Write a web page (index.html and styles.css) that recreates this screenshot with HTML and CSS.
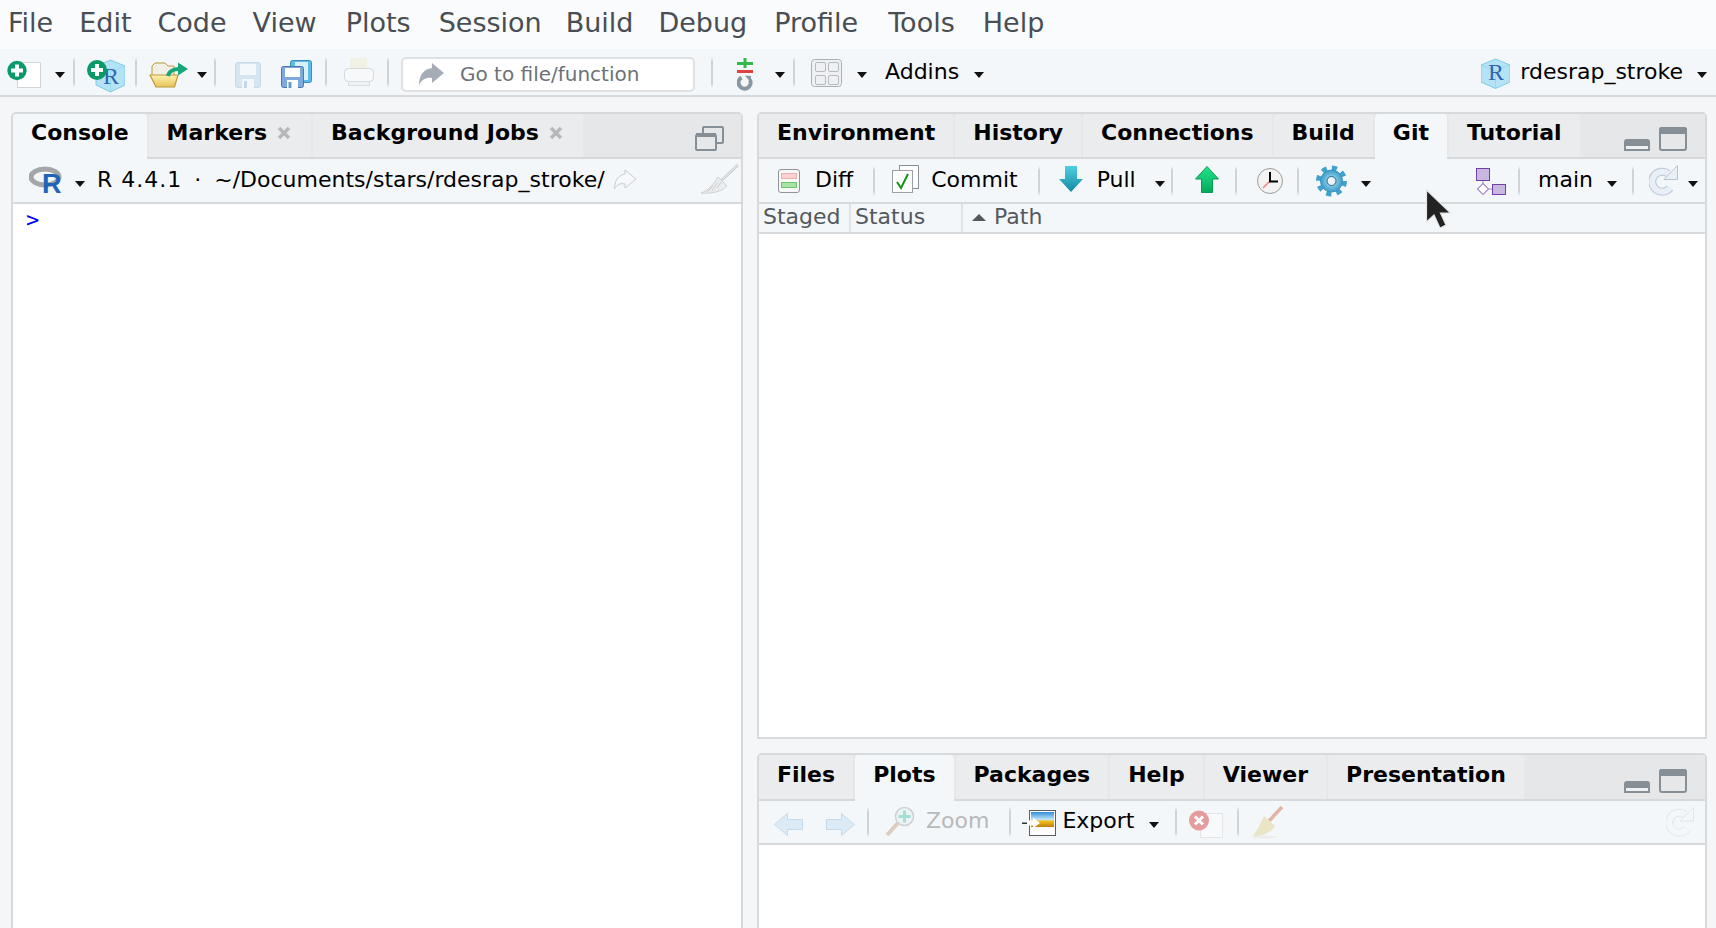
FILE: index.html
```html
<!DOCTYPE html>
<html lang="en">
<head>
<meta charset="utf-8">
<title>RStudio</title>
<link rel="stylesheet" href="styles.css">
</head>
<body>
<svg class="defs" width="0" height="0">
  <defs>
    <linearGradient id="gPull" x1="0" y1="0" x2="0" y2="1"><stop offset="0" stop-color="#4fd0e0"/><stop offset="1" stop-color="#1488a6"/></linearGradient>
    <linearGradient id="gUp" x1="0" y1="0" x2="0" y2="1"><stop offset="0" stop-color="#1fe58a"/><stop offset="1" stop-color="#08a85c"/></linearGradient>
    <radialGradient id="gGear"><stop offset="0" stop-color="#b5e8f8"/><stop offset="1" stop-color="#3a9cc8"/></radialGradient>
    <linearGradient id="gFolder" x1="0" y1="0" x2="0" y2="1"><stop offset="0" stop-color="#fff2b0"/><stop offset="1" stop-color="#e6c35a"/></linearGradient>
    <linearGradient id="gSky" x1="0" y1="0" x2="0" y2="1"><stop offset="0" stop-color="#2f8fdc"/><stop offset="0.5" stop-color="#bfe4f5"/><stop offset="0.6" stop-color="#f2c21e"/><stop offset="1" stop-color="#c07d10"/></linearGradient>
  </defs>
</svg>

<nav class="menubar">
  <span>File</span><span class="ml26">Edit</span><span class="ml26">Code</span><span class="ml26">View</span><span class="ml29">Plots</span><span class="ml28">Session</span><span class="ml24">Build</span><span class="ml25">Debug</span><span class="ml27">Profile</span><span class="ml30">Tools</span><span class="ml28">Help</span>
</nav>

<div class="maintool">
  <svg width="34" height="47" viewBox="7 49 34 47"><rect x="17.500" y="62.500" width="23" height="25" fill="#fff" stroke="#d2d6da"/><circle cx="17" cy="70.500" r="9.700" fill="#0a9a68"/><path d="M11 68.500h4v-4h4v4h4v4h-4v4h-4v-4h-4z" fill="#fff"/></svg>
  <i class="caret ml14"></i>
  <i class="sep ml8"></i>
  <svg class="ml12" width="38" height="47" viewBox="87 49 38 47"><path d="M110.500 60L125 66V85L110.500 92L96 85V66Z" fill="#b4e3f6" stroke="#7fcbe6"/><path d="M96 66L110.500 72L125 66M110.500 72V92" fill="none" stroke="#8fd3ea" stroke-width=".7"/><text x="103" y="84" class="cube-r">R</text><circle cx="97" cy="70" r="10" fill="#0a9a68"/><path d="M91 68h4v-4h4v4h4v4h-4v4h-4v-4h-4z" fill="#fff"/></svg>
  <i class="sep ml10"></i>
  <svg class="ml12" width="39" height="47" viewBox="149 49 39 47"><path d="M152 73V66L155 63H165L168 66H174V76H152Z" fill="#f1efe6" stroke="#bd9a3a"/><path d="M150 75H178L174.500 87H156Z" fill="url(#gFolder)" stroke="#bd9a3a" stroke-width="1.200"/><path d="M168 76C169 71 174 69 179 69" fill="none" stroke="#15a67a" stroke-width="4"/><path d="M178 62.500L188 69L178 75.500Z" fill="#15a67a"/></svg>
  <i class="caret ml9"></i>
  <i class="sep ml7"></i>
  <svg class="ml19" width="26" height="47" viewBox="235 49 26 47"><rect x="235.500" y="62.500" width="25" height="25" rx="2.500" fill="#d5e5f2" stroke="#c6d9e8"/><rect x="240" y="64" width="16" height="11" fill="#f4f8fb"/><rect x="242" y="79" width="12" height="9" fill="#f4f8fb"/><rect x="244" y="81" width="3" height="7" fill="#c4d8e8"/></svg>
  <svg class="ml20" width="31" height="47" viewBox="281 49 31 47"><rect x="290.500" y="60.500" width="21" height="22" rx="2" fill="#5cbbe9" stroke="#3f8db8"/><rect x="295" y="62" width="13" height="18" fill="#d8f0fa"/><rect x="281.500" y="66.500" width="22" height="21" rx="2" fill="#7ea9dc" stroke="#4a78ad"/><rect x="285" y="68" width="15" height="9" fill="#fff"/><rect x="287" y="80" width="11" height="8" fill="#fff"/><rect x="288.500" y="82" width="3" height="6" fill="#6b97c9"/></svg>
  <i class="sep ml13"></i>
  <svg class="ml17" width="30" height="47" viewBox="344 49 30 47"><rect x="350" y="58" width="17" height="15" fill="#f1f1e4"/><rect x="344.500" y="68.500" width="29" height="13" rx="4" fill="#f6f8f9" stroke="#d2d8dc"/><rect x="348.500" y="81.500" width="21" height="4" fill="#eef1f5" stroke="#d8dde1"/></svg>
  <i class="sep ml13"></i>
  <div class="goto ml12">
    <svg width="25" height="32" viewBox="418 58 25 32"><path d="M443 73L431 63V68C422 69 418 76 418 85C421 79 426 77 431 78V83Z" fill="#a6adb8"/></svg>
    <span>Go to file/function</span>
  </div>
  <i class="sep ml16"></i>
  <svg class="ml24" width="16" height="47" viewBox="737 49 16 47"><rect x="737" y="62" width="16" height="3" fill="#35b84a"/><rect x="743.500" y="58" width="3" height="10" fill="#35b84a"/><rect x="737" y="70" width="16" height="3" fill="#e04040"/><path d="M741.500 77.500A6 6 0 1 0 750 80" fill="none" stroke="#8997a3" stroke-width="4"/><path d="M745 75.500L751 76L751 83Z" fill="#8997a3"/></svg>
  <i class="caret ml22"></i>
  <i class="sep ml8"></i>
  <svg class="ml16" width="31" height="47" viewBox="811 49 31 47"><rect x="811.500" y="59.500" width="30" height="27" rx="3" fill="#eef0f3" stroke="#a9b0b7"/><rect x="815.500" y="62.500" width="10" height="9" rx="1.500" fill="none" stroke="#b5bbc1"/><rect x="828.500" y="62.500" width="10" height="9" rx="1.500" fill="none" stroke="#b5bbc1"/><rect x="815.500" y="75.500" width="10" height="9" rx="1.500" fill="none" stroke="#b5bbc1"/><rect x="828.500" y="75.500" width="10" height="9" rx="1.500" fill="none" stroke="#b5bbc1"/></svg>
  <i class="caret ml15"></i>
  <span class="tool-text ml18">Addins</span>
  <i class="caret ml15"></i>
  <div class="push"></div>
  <svg width="29" height="47" viewBox="1481 49 29 47"><path d="M1495.500 59L1510 65V82L1495.500 88.500L1481 82V65Z" fill="#b4e3f6" stroke="#7fcbe6"/><path d="M1481 65L1495.500 71L1510 65M1495.500 71V88.500" fill="none" stroke="#8fd3ea" stroke-width=".7"/><text x="1488" y="80" class="cube-r">R</text></svg>
  <span class="tool-text ml10">rdesrap_stroke</span>
  <i class="caret ml14"></i>
</div>

<main class="panes">
  <section class="pane left">
    <div class="tabbar">
      <div class="tab active">Console</div>
      <div class="tab">Markers<svg class="close" width="14" height="14" viewBox="0 0 14 14"><path d="M2 2L12 12M12 2L2 12"/></svg></div>
      <div class="tab">Background Jobs<svg class="close" width="14" height="14" viewBox="0 0 14 14"><path d="M2 2L12 12M12 2L2 12"/></svg></div>
      <div class="push"></div>
      <svg class="popout" width="29" height="26" viewBox="695 126 29 26"><path d="M703 133V127.500Q703 127 704 127H722Q723 127 723 128V142Q723 143 722 143H716" fill="none" stroke="#868f95" stroke-width="2"/><rect x="696" y="135" width="20" height="15" rx="1" fill="none" stroke="#868f95" stroke-width="2"/><rect x="696" y="133" width="20" height="4" fill="#868f95"/></svg>
    </div>
    <div class="toolbar">
      <svg class="ml16" width="33" height="43" viewBox="29 159 33 43"><ellipse cx="45" cy="177" rx="14" ry="8" fill="none" stroke="#a4a6aa" stroke-width="5"/><text x="42" y="192.500" class="r-logo">R</text></svg>
      <i class="caret ml13"></i>
      <span class="tool-text ml12 version">R 4.4.1</span>
      <span class="tool-text ml12">·</span>
      <span class="tool-text ml13">~/Documents/stars/rdesrap_stroke/</span>
      <svg class="ml9" width="23" height="43" viewBox="613 159 23 43"><path d="M635 179L624 170V174C617 175 613.500 181 613.500 189C616 184 620 183 624 184V188Z" fill="#f6f8fa" stroke="#c7ccd4"/></svg>
      <div class="push"></div>
      <svg class="edge2" width="38" height="43" viewBox="700 159 38 43"><path d="M737 165L720 181" stroke="#c9ccce" stroke-width="2.500"/><path d="M737 165L720 181" stroke="#f4f7f9" stroke-width=".8"/><path d="M717 177L726 186C722 191 712 194 700 193C708 190 713 184 717 177Z" fill="#eaeced" stroke="#cfd2d4"/><path d="M716 188L720 182M711 191L716 183M706 192L712 186" stroke="#c9ccce"/></svg>
    </div>
    <div class="console"><span class="prompt">&gt;</span></div>
  </section>

  <div class="rightcol">
    <section class="pane top">
      <div class="tabbar">
        <div class="tab">Environment</div>
        <div class="tab">History</div>
        <div class="tab">Connections</div>
        <div class="tab">Build</div>
        <div class="tab active">Git</div>
        <div class="tab">Tutorial</div>
        <div class="push"></div>
        <svg class="winbtns" width="64" height="25" viewBox="1624 127 64 25"><path d="M1624 151V142Q1624 139 1627 139H1647Q1650 139 1650 142V151Z" fill="#868f95"/><rect x="1626" y="146" width="22" height="3" fill="#eef0f2"/><rect x="1660" y="128" width="26" height="22" rx="2" fill="none" stroke="#868f95" stroke-width="2"/><path d="M1659 134V130Q1659 127 1662 127H1684Q1687 127 1687 130V134Z" fill="#868f95"/></svg>
      </div>
      <div class="toolbar edge7">
        <svg class="ml19" width="22" height="43" viewBox="779 159 22 43"><rect x="779.500" y="169.500" width="21" height="23" rx="2.500" fill="#f8f9f7" stroke="#8e9499"/><rect x="782.500" y="173.500" width="15" height="5" fill="#fbd0d0" stroke="#eab0b0"/><rect x="782.500" y="182.500" width="15" height="5" fill="#a6e4a6" stroke="#70c070"/></svg>
        <span class="tool-text ml15">Diff</span>
        <i class="sep ml20"></i>
        <svg class="ml17" width="27" height="43" viewBox="892 159 27 43"><rect x="899.500" y="165.500" width="19" height="23" fill="#fff" stroke="#8b9095"/><rect x="892.500" y="170.500" width="20" height="22" fill="#fff" stroke="#9ba0a5"/><path d="M897 182L901 188L908 174" fill="none" stroke="#149414" stroke-width="2"/></svg>
        <span class="tool-text ml12">Commit</span>
        <i class="sep ml20"></i>
        <svg class="ml19" width="24" height="43" viewBox="1059 159 24 43"><path d="M1065 166H1077V179H1083L1071 192L1059 179H1065Z" fill="url(#gPull)"/></svg>
        <span class="tool-text ml14">Pull</span>
        <i class="caret ml19"></i>
        <i class="sep ml6"></i>
        <svg class="ml22" width="24" height="43" viewBox="1194 159 24 43"><path d="M1206 166.500L1217.500 179H1211.500V192.500H1200.500V179H1194.500Z" fill="url(#gUp)" stroke="#0b9a54"/></svg>
        <i class="sep ml16"></i>
        <svg class="ml20" width="26" height="43" viewBox="1257 159 26 43"><circle cx="1270" cy="181" r="12.500" fill="#f3f3f3" stroke="#9c9c9c"/><path d="M1270 181L1263 188" stroke="#f08080" stroke-width="1.500"/><path d="M1270 172V181.500H1278" fill="none" stroke="#000" stroke-width="2"/></svg>
        <i class="sep ml14"></i>
        <svg class="ml17" width="31" height="43" viewBox="1316 159 31 43"><circle cx="1331.500" cy="181" r="12.500" fill="none" stroke="#42a0cc" stroke-width="6" stroke-dasharray="4.900 4.917"/><circle cx="1331.500" cy="181" r="11" fill="url(#gGear)" stroke="#3a94c0"/><circle cx="1331.500" cy="181" r="4.500" fill="#eef4f8" stroke="#23688c"/></svg>
        <i class="caret ml14"></i>
        <div class="push"></div>
        <svg width="30" height="43" viewBox="1476 159 30 43"><path d="M1483 180V184M1489 189H1492" stroke="#9a9a9a"/><rect x="1476.500" y="168.500" width="13" height="12" fill="#c8b8e0" stroke="#7040a8"/><path d="M1483 183.500L1488.500 189L1483 194.500L1477.500 189Z" fill="#fff" stroke="#7040a8"/><rect x="1492.500" y="184.500" width="13" height="10" fill="#c8b8e0" stroke="#7040a8"/></svg>
        <i class="sep ml12"></i>
        <span class="tool-text ml18">main</span>
        <i class="caret ml14"></i>
        <i class="sep ml15"></i>
        <svg class="ml15" width="29" height="43" viewBox="1648 159 29 43"><path d="M1667 173.500A10 10 0 1 0 1669 188" fill="none" stroke="#b8c4d4" stroke-width="8"/><path d="M1667 173.500A10 10 0 1 0 1669 188" fill="none" stroke="#e9eff7" stroke-width="6"/><path d="M1676.500 165.500V179.500H1663Z" fill="#e9eff7" stroke="#b8c4d4"/></svg>
        <i class="caret ml10"></i>
      </div>
      <div class="gittable">
        <div class="gitcol staged">Staged</div>
        <div class="gitcol status">Status</div>
        <div class="gitcol path"><i class="uptri"></i>Path</div>
      </div>
      <div class="gitbody"></div>
    </section>

    <section class="pane bottom">
      <div class="tabbar">
        <div class="tab">Files</div>
        <div class="tab active">Plots</div>
        <div class="tab">Packages</div>
        <div class="tab">Help</div>
        <div class="tab">Viewer</div>
        <div class="tab">Presentation</div>
        <div class="push"></div>
        <svg class="winbtns" width="64" height="25" viewBox="1624 127 64 25"><path d="M1624 151V142Q1624 139 1627 139H1647Q1650 139 1650 142V151Z" fill="#868f95"/><rect x="1626" y="146" width="22" height="3" fill="#eef0f2"/><rect x="1660" y="128" width="26" height="22" rx="2" fill="none" stroke="#868f95" stroke-width="2"/><path d="M1659 134V130Q1659 127 1662 127H1684Q1687 127 1687 130V134Z" fill="#868f95"/></svg>
      </div>
      <div class="toolbar">
        <svg class="ml15" width="29" height="43" viewBox="774 801 29 43"><path d="M774.500 824.500L787.500 813.500V819.500H802.500V829.500H787.500V835.500Z" fill="#dceaf5" stroke="#c6dbea"/></svg>
        <svg class="ml23" width="29" height="43" viewBox="826 801 29 43"><path d="M854.500 824.500L841.500 813.500V819.500H826.500V829.500H841.500V835.500Z" fill="#dceaf5" stroke="#c6dbea"/></svg>
        <i class="sep ml12"></i>
        <svg class="ml16" width="29" height="43" viewBox="885 801 29 43"><path d="M898 823L887 835" stroke="#dccdbe" stroke-width="4"/><circle cx="904.500" cy="816.500" r="9" fill="#edf3f5" stroke="#cdd2d6" stroke-width="1.500"/><path d="M903 810.500h3v4.500h4.500v3h-4.500v4.500h-3v-4.500h-4.500v-3h4.500z" fill="#9fe2d2"/></svg>
        <span class="tool-text ml12 dim">Zoom</span>
        <i class="sep ml20"></i>
        <svg class="ml11" width="34" height="43" viewBox="1023 801 34 43"><rect x="1030.500" y="810.500" width="26" height="25" fill="#fff" stroke="#5b5f63"/><rect x="1032" y="812" width="23" height="15" fill="url(#gSky)"/><rect x="1023" y="822.500" width="5" height="1.500" fill="#333"/><path d="M1028 820.500H1034V817.500L1041 823L1034 828.500V825.500H1028Z" fill="#fff"/></svg>
        <span class="tool-text ml6">Export</span>
        <i class="caret ml15"></i>
        <i class="sep ml16"></i>
        <svg class="ml12" width="34" height="43" viewBox="1189 801 34 43"><rect x="1200.500" y="813.500" width="22" height="24" fill="#f7f9fa" stroke="#e2e6e8"/><circle cx="1199" cy="820.500" r="10" fill="#e59c9c"/><path d="M1195 816.500L1203 824.500M1203 816.500L1195 824.500" stroke="#fff" stroke-width="3"/></svg>
        <i class="sep ml14"></i>
        <svg class="ml13" width="31" height="43" viewBox="1252 801 31 43"><path d="M1282 807L1269 821" stroke="#e4b5a6" stroke-width="3.500"/><path d="M1264 816L1275 826C1271 833 1262 836 1252 837C1258 830 1260 823 1264 816Z" fill="#ebe5c8"/><ellipse cx="1265" cy="837" rx="12" ry="1.500" fill="#ebecec"/></svg>
        <div class="push"></div>
        <svg class="edge11" width="28" height="43" viewBox="1666 801 28 43"><path d="M1685 814.500A10 10 0 1 0 1687 829" fill="none" stroke="#e2e6ea" stroke-width="8"/><path d="M1685 814.500A10 10 0 1 0 1687 829" fill="none" stroke="#f4f7f9" stroke-width="6"/><path d="M1693.500 807.500V821H1680Z" fill="#f4f7f9" stroke="#e2e6ea"/></svg>
      </div>
      <div class="plotbody"></div>
    </section>
  </div>
</main>

<svg class="cursor" width="27" height="41" viewBox="1425 187 27 41"><path d="M1426.500 189V221L1434 214L1440 227L1446 224L1440.500 212H1450.500Z" fill="#222" stroke="#e4e4e4" stroke-width="1.200"/></svg>
</body>
</html>
```

FILE: styles.css
```css
* { box-sizing: border-box; }
html, body { margin: 0; height: 100%; }
body {
  width: 1716px;
  height: 928px;
  overflow: hidden;
  position: relative;
  background: #f4f6f8;
  font-family: "DejaVu Sans", sans-serif;
  color: #000;
}
svg { display: block; flex: none; }
.defs { position: absolute; }

.menubar {
  height: 49px;
  display: flex;
  align-items: center;
  padding: 0 0 5px 8px;
  background: #fafbfc;
  font-size: 27px;
  color: #484e53;
}

.maintool {
  height: 48px;
  display: flex;
  align-items: center;
  padding-left: 7px;
  padding-right: 9px;
  background: #f4f7f9;
  border-bottom: 2px solid #d6dadc;
}
.push { flex: 1; }
.caret {
  flex: none;
  width: 0;
  height: 0;
  margin-top: 6px;
  border-left: 5px solid transparent;
  border-right: 5px solid transparent;
  border-top: 6px solid #111;
}
.sep {
  flex: none;
  width: 2px;
  height: 31px;
  background: linear-gradient(to bottom, transparent, #cfd3d6 15%, #cfd3d6 85%, transparent);
}
.tool-text { font-size: 22px; white-space: nowrap; line-height: 26px; }
.toolbar .tool-text { margin-top: -2px; }
.dim { color: #b7b9bb; }
.version { letter-spacing: 1px; }

.goto {
  width: 294px;
  height: 35px;
  flex: none;
  display: flex;
  align-items: center;
  gap: 16px;
  margin-top: 4px;
  padding-left: 16px;
  background: #fff;
  border: 2px solid #dde1e4;
  border-radius: 5px;
  font-size: 20px;
  color: #6c7277;
}

.panes {
  display: flex;
  gap: 14px;
  padding: 15px 0 0 11px;
}
.pane {
  border: 2px solid #d6dadc;
  border-radius: 5px 5px 0 0;
  background: #f4f7f9;
  display: flex;
  flex-direction: column;
}
.left { width: 732px; height: 830px; }
.rightcol {
  width: 950px;
  display: flex;
  flex-direction: column;
  gap: 14px;
}
.top { height: 627px; }
.bottom { height: 201px; }

.tabbar {
  height: 45px;
  flex: none;
  display: flex;
  gap: 2px;
  background: #e6e7e9;
  border-bottom: 2px solid #d6dadc;
}
.tab {
  height: 43px;
  display: flex;
  align-items: center;
  padding: 0 18px 6px 18px;
  background: #ebecee;
  border-radius: 4px 4px 0 0;
  font-size: 22px;
  font-weight: 700;
  white-space: nowrap;
}
.tab.active {
  height: 45px;
  background: #f4f7f9;
  position: relative;
  padding-bottom: 8px;
}
.close { margin-left: 10px; margin-right: 2px; }
.close path { stroke: #b6b9bc; stroke-width: 3.4; fill: none; }
.popout { margin: 12px 17px 0 0; }
.winbtns { margin: 13px 17px 0 0; }

.bottom .tabbar { height: 46px; }
.bottom .tab { height: 44px; padding-bottom: 5px; }
.bottom .tab.active { height: 46px; padding-bottom: 7px; }
.bottom .winbtns { margin-top: 14px; }
.bottom .toolbar { height: 42px; }

.toolbar {
  height: 43px;
  flex: none;
  display: flex;
  align-items: center;
  background: #f4f7f9;
}
.toolbar .caret { margin-top: 6px; }
.toolbar .sep { height: 30px; }
.edge2 { margin-right: 2px; }
.edge7 { padding-right: 7px; }
.edge11 { margin-right: 11px; }

.console {
  flex: 1;
  background: #fff;
  border-top: 2px solid #d6dadc;
  padding: 3px 0 0 13px;
  font-family: "DejaVu Sans Mono", monospace;
  font-size: 22px;
  line-height: 26px;
}
.prompt { color: #0000ff; }

.gittable {
  height: 32px;
  flex: none;
  display: flex;
  border-top: 2px solid #d6dadc;
  border-bottom: 2px solid #d6dadc;
  font-size: 22px;
  color: #52595e;
  line-height: 26px;
}
.gitcol { display: flex; align-items: center; padding-bottom: 2px; border-right: 2px solid #dfe3e5; }
.staged { width: 92px; padding-left: 4px; }
.status { width: 112px; padding-left: 4px; }
.path { flex: 1; padding-left: 9px; border-right: 0; }
.uptri {
  width: 0;
  height: 0;
  margin-right: 8px;
  border-left: 7px solid transparent;
  border-right: 7px solid transparent;
  border-bottom: 7px solid #52595e;
}
.gitbody { flex: 1; background: #fff; }
.plotbody { flex: 1; background: #fff; border-top: 2px solid #d6dadc; }

.cube-r { font-family: "Liberation Serif", serif; font-size: 24px; fill: #2f66b4; }
.r-logo { font-family: "Liberation Sans", sans-serif; font-weight: 700; font-size: 27px; fill: #1f65b7; }

.cursor { position: absolute; left: 1425px; top: 188px; }

.ml6 { margin-left: 6px; }
.ml7 { margin-left: 7px; }
.ml8 { margin-left: 8px; }
.ml9 { margin-left: 9px; }
.ml10 { margin-left: 10px; }
.ml11 { margin-left: 11px; }
.ml12 { margin-left: 12px; }
.ml13 { margin-left: 13px; }
.ml14 { margin-left: 14px; }
.ml15 { margin-left: 15px; }
.ml16 { margin-left: 16px; }
.ml17 { margin-left: 17px; }
.ml18 { margin-left: 18px; }
.ml19 { margin-left: 19px; }
.ml20 { margin-left: 20px; }
.ml21 { margin-left: 21px; }
.ml22 { margin-left: 22px; }
.ml23 { margin-left: 23px; }
.ml24 { margin-left: 24px; }
.ml25 { margin-left: 25px; }
.ml26 { margin-left: 26px; }
.ml27 { margin-left: 27px; }
.ml28 { margin-left: 28px; }
.ml29 { margin-left: 29px; }
.ml30 { margin-left: 30px; }
```
